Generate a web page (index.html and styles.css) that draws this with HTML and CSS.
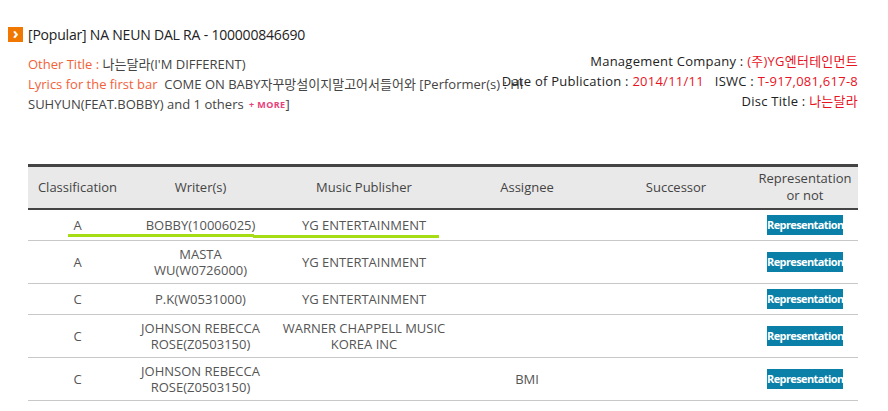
FILE: index.html
```html
<!DOCTYPE html>
<html lang="en">
<head>
    <meta charset="UTF-8">
    <title>Work Detail</title>
    <link rel="stylesheet" href="styles.css">
</head>
<body>
    <div class="page">
        <h2 class="work-title"><span class="arrow-icon">&#8250;</span>[Popular] NA NEUN DAL RA - 100000846690</h2>

        <div class="info">
            <div class="info-left">
                <p><span class="label">Other Title :</span> 나는달라(I'M DIFFERENT)</p>
                <p><span class="label">Lyrics for the first bar</span>&nbsp; COME ON BABY자꾸망설이지말고어서들어와 [Performer(s) : HI SUHYUN(FEAT.BOBBY) and 1 others <span class="more">+ MORE</span>]</p>
            </div>
            <div class="info-right">
                <p>Management Company : <span class="value">(주)YG엔터테인먼트</span></p>
                <p>Date of Publication : <span class="value">2014/11/11</span>&nbsp;&nbsp; ISWC : <span class="value">T-917,081,617-8</span></p>
                <p>Disc Title : <span class="value">나는달라</span></p>
            </div>
        </div>

        <div class="table-wrap">
            <table class="rights">
                <colgroup>
                    <col style="width: 99px">
                    <col style="width: 147px">
                    <col style="width: 180px">
                    <col style="width: 146px">
                    <col style="width: 152px">
                    <col>
                </colgroup>
                <thead>
                    <tr>
                        <th>Classification</th>
                        <th>Writer(s)</th>
                        <th>Music Publisher</th>
                        <th>Assignee</th>
                        <th>Successor</th>
                        <th>Representation<br>or not</th>
                    </tr>
                </thead>
                <tbody>
                    <tr>
                        <td>A</td>
                        <td>BOBBY(10006025)</td>
                        <td>YG ENTERTAINMENT</td>
                        <td></td>
                        <td></td>
                        <td><span class="rep-btn">Representation</span></td>
                    </tr>
                    <tr>
                        <td>A</td>
                        <td>MASTA<br>WU(W0726000)</td>
                        <td>YG ENTERTAINMENT</td>
                        <td></td>
                        <td></td>
                        <td><span class="rep-btn">Representation</span></td>
                    </tr>
                    <tr>
                        <td>C</td>
                        <td>P.K(W0531000)</td>
                        <td>YG ENTERTAINMENT</td>
                        <td></td>
                        <td></td>
                        <td><span class="rep-btn">Representation</span></td>
                    </tr>
                    <tr>
                        <td>C</td>
                        <td>JOHNSON REBECCA<br>ROSE(Z0503150)</td>
                        <td>WARNER CHAPPELL MUSIC<br>KOREA INC</td>
                        <td></td>
                        <td></td>
                        <td><span class="rep-btn">Representation</span></td>
                    </tr>
                    <tr>
                        <td>C</td>
                        <td>JOHNSON REBECCA<br>ROSE(Z0503150)</td>
                        <td></td>
                        <td>BMI</td>
                        <td></td>
                        <td><span class="rep-btn">Representation</span></td>
                    </tr>
                </tbody>
            </table>
            <!-- highlighter marks over the first row -->
            <span class="mark mark-1"></span>
            <span class="mark mark-2"></span>
        </div>
    </div>
</body>
</html>
```

FILE: styles.css
```css
body {
    margin: 0;
    padding: 0 8px;
    font-family: 'Open Sans', 'Noto Sans CJK KR', sans-serif;
    font-size: 13px;
    color: #333;
    background: #fff;
}
p {
    margin: 0;
}
.page {
    width: 850px;
}
.work-title {
    display: flex;
    align-items: center;
    margin: 0;
    padding-top: 24px;
    height: 20px;
    font-size: 14px;
    font-weight: normal;
    color: #222;
    letter-spacing: -0.2px;
}
.arrow-icon {
    display: inline-flex;
    align-items: center;
    justify-content: center;
    width: 15px;
    height: 15px;
    margin-right: 5px;
    background: #f07800;
    color: #fff;
    font-size: 16px;
    font-weight: bold;
    line-height: 1;
    padding-bottom: 2px;
    box-sizing: border-box;
}
.info {
    position: relative;
    margin-top: 10px;
    padding-left: 20px;
    height: 110px;
}
.info-left {
    width: 505px;
    line-height: 20px;
    color: #444;
}
.label {
    color: #f2623a;
}
.more {
    font-size: 9px;
    font-weight: bold;
    letter-spacing: 0.4px;
    color: #e8407a;
    margin-left: 2px;
    vertical-align: 1px;
}
.info-right {
    position: absolute;
    top: -3px;
    right: 0;
    text-align: right;
    line-height: 20px;
    letter-spacing: 0.25px;
    color: #222;
}
.value {
    color: #e8131e;
}
.table-wrap {
    position: relative;
    margin-left: 20px;
    width: 830px;
}
.rights {
    width: 830px;
    border-collapse: collapse;
    table-layout: fixed;
    border-top: 3px solid #444;
}
.rights th {
    background: #e9e9e9;
    font-weight: normal;
    color: #444;
    line-height: 17px;
    padding: 3px 4px 4px;
    height: 34px;
    border-bottom: 2px solid #444;
}
.rights td {
    text-align: center;
    color: #555;
    line-height: 16px;
    padding: 5px 4px;
    height: 20px;
    border-bottom: 1px solid #c8c8c8;
}
.rep-btn {
    display: inline-block;
    width: 76px;
    height: 20px;
    line-height: 20px;
    background: #0a7fa8;
    color: #fff;
    font-size: 11px;
    font-weight: bold;
    letter-spacing: -0.6px;
    vertical-align: middle;
}
.mark {
    position: absolute;
    height: 3px;
    background: #a6dc14;
}
.mark-1 {
    left: 40px;
    width: 186px;
    top: 70px;
}
.mark-2 {
    left: 225px;
    width: 186px;
    top: 71px;
}
```
